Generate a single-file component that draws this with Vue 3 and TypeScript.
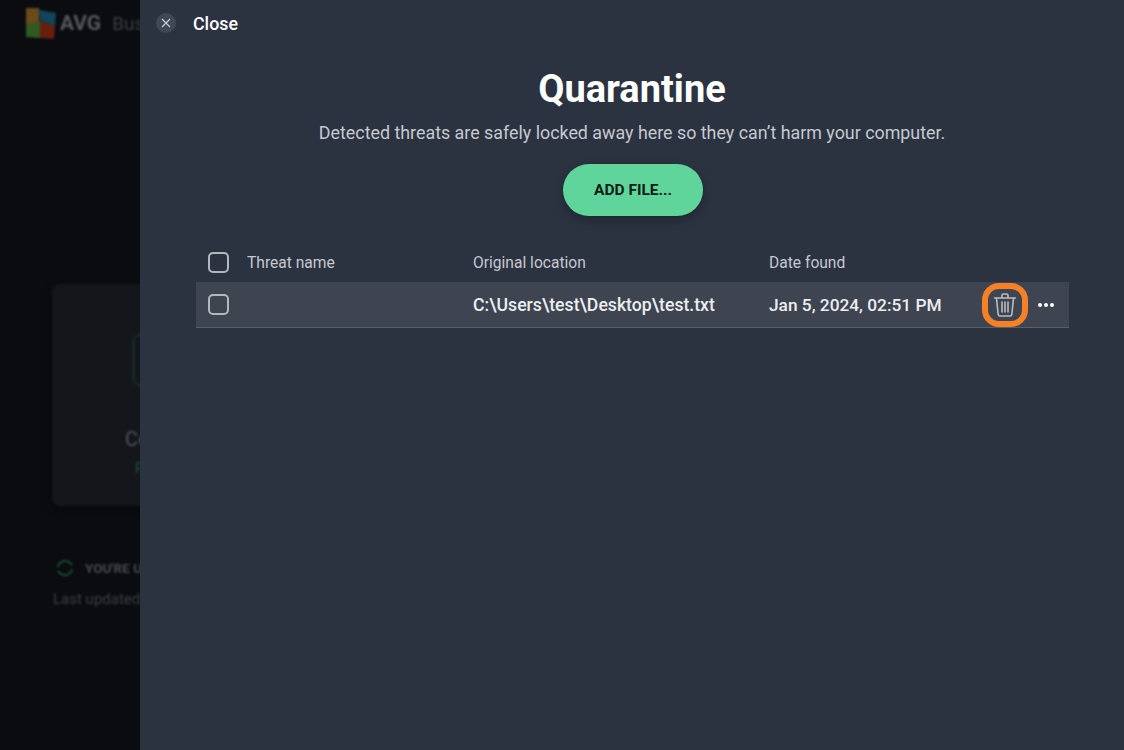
<script setup lang="ts">
const columns = ['Threat name', 'Original location', 'Date found']
const threat = { name: '', location: 'C:\\Users\\test\\Desktop\\test.txt', date: 'Jan 5, 2024, 02:51 PM' }
</script>

<template>
  <div class="screen">
    <aside class="behind">
      <div class="behindInner">
        <div class="brand">
          <svg width="32" height="32" viewBox="0 0 32 32" class="logo">
            <path d="M1 1 L14 1 L14 15 L1 18 Z" fill="#6b4a1a" />
            <path d="M14 3 L31 6 L30 19 L15 14 Z" fill="#10465a" />
            <path d="M1 18 L15 14 L15 31 L1 30 Z" fill="#2f5a22" />
            <path d="M15 14 L30 19 L29 32 L15 31 Z" fill="#6a1e0e" />
          </svg>
          <span class="avg">AVG</span>
          <span class="bus">Business</span>
        </div>
        <div class="card">
          <div class="shield"></div>
          <div class="cardTitle">Computer</div>
          <div class="cardState">Protected</div>
        </div>
        <div class="updated">
          <svg width="20" height="20" viewBox="0 0 20 20" fill="none" stroke="#174a32" stroke-width="2">
            <path d="M3 9a7 7 0 0 1 12-4l2 2M17 11a7 7 0 0 1-12 4l-2-2" />
          </svg>
          <span>YOU'RE UP TO DATE</span>
        </div>
        <div class="lastUpdated">Last updated today</div>
      </div>
    </aside>

    <main class="panel">
      <div class="closeRow">
        <span class="closeBtn">
          <svg width="10" height="10" viewBox="0 0 10 10" stroke="#c9ccd2" stroke-width="1.2">
            <path d="M1 1 L9 9 M9 1 L1 9" />
          </svg>
        </span>
        <span class="closeLabel">Close</span>
      </div>

      <h1 class="title">Quarantine</h1>
      <p class="subtitle">Detected threats are safely locked away here so they can’t harm your computer.</p>
      <button class="addBtn">ADD FILE...</button>

      <div class="table">
        <div class="headRow">
          <span class="check"></span>
          <span v-for="col in columns" :key="col" class="headCell">{{ col }}</span>
        </div>
        <div class="row">
          <span class="check"></span>
          <span class="cell">{{ threat.name }}</span>
          <span class="cell location">{{ threat.location }}</span>
          <span class="cell date">{{ threat.date }}</span>
          <span class="trash">
            <svg width="24" height="26" viewBox="0 0 24 26" fill="none" stroke="#b9bcc2" stroke-width="1.6" stroke-linejoin="round" stroke-linecap="round">
              <path d="M1.5 6 H22.5 M9 5.5 V3.5 Q9 2 10.5 2 H13.5 Q15 2 15 3.5 V5.5" />
              <path d="M3.5 6.5 L5.2 22.5 Q5.4 24 7 24 H17 Q18.6 24 18.8 22.5 L20.5 6.5" />
              <path d="M9 10 V20 M12 10 V20 M15 10 V20" />
            </svg>
          </span>
          <span class="dots"><i></i><i></i><i></i></span>
        </div>
      </div>
    </main>
  </div>
</template>

<style scoped>
.screen {
  display: flex;
  width: 1124px;
  height: 750px;
  overflow: hidden;
  font-family: Roboto, "Liberation Sans", sans-serif;
}

.behind {
  width: 140px;
  flex: none;
  overflow: hidden;
  background: #0a0c10;
}

.behindInner {
  width: 400px;
  padding-left: 25px;
  filter: blur(0.8px);
}

.brand {
  display: flex;
  align-items: center;
  height: 46px;
}

.avg {
  margin-left: 3px;
  font-size: 21px;
  font-weight: 700;
  color: #55585c;
}

.bus {
  margin-left: 11px;
  font-size: 19px;
  color: #3c3f44;
}

.card {
  box-sizing: border-box;
  width: 300px;
  height: 222px;
  margin: 238px 0 0 27px;
  padding: 51px 0 0 73px;
  border-radius: 8px;
  background: #14161b;
  box-shadow: 0 4px 10px rgba(0, 0, 0, 0.4);
}

.shield {
  box-sizing: border-box;
  width: 60px;
  height: 50px;
  margin-left: 8px;
  border: 1px solid #174a32;
  border-radius: 6px;
}

.cardTitle {
  margin-top: 42px;
  font-size: 20px;
  color: #505357;
}

.cardState {
  margin: 8px 0 0 10px;
  font-size: 15px;
  color: #1b5238;
}

.updated {
  display: flex;
  align-items: center;
  gap: 10px;
  margin: 52px 0 0 30px;
  font-size: 13.5px;
  font-weight: 700;
  color: #47494d;
}

.lastUpdated {
  margin: 12px 0 0 28px;
  font-size: 15px;
  color: #3c3f44;
}

.panel {
  flex: 1;
  display: flex;
  flex-direction: column;
  align-items: center;
  background: #2b3240;
  color: #fff;
}

.closeRow {
  align-self: flex-start;
  display: flex;
  align-items: center;
  height: 46px;
  padding-left: 16px;
}

.closeBtn {
  display: flex;
  align-items: center;
  justify-content: center;
  width: 20px;
  height: 20px;
  border-radius: 50%;
  background: #414855;
}

.closeLabel {
  margin-left: 17px;
  font-size: 17.8px;
  font-weight: 500;
}

.title {
  margin: 19px 0 0;
  font-size: 38px;
  line-height: 48px;
  font-weight: 700;
}

.subtitle {
  margin: 8px 0 0;
  font-size: 17.85px;
  line-height: 24px;
  color: #c6c9cf;
}

.addBtn {
  width: 140px;
  height: 52px;
  margin-top: 19px;
  margin-left: 2px;
  border: none;
  border-radius: 26px;
  background: #5fd49b;
  box-shadow: 0 4px 10px rgba(0, 0, 0, 0.25);
  color: #102018;
  font-family: inherit;
  font-size: 15.5px;
  font-weight: 700;
}

.table {
  align-self: flex-start;
  width: 873px;
  margin: 27px 0 0 56px;
}

.headRow,
.row {
  display: grid;
  grid-template-columns: 39px 226px 296px 213px 46px 1fr;
  align-items: center;
  padding-left: 12px;
}

.headRow {
  height: 39px;
}

.headCell {
  padding-top: 1px;
  font-size: 15.6px;
  color: #c6c9cf;
}

.row {
  box-sizing: border-box;
  height: 46px;
  background: #3e4450;
  border-bottom: 1px solid #5a606b;
}

.cell {
  font-weight: 500;
  color: #eceef0;
}

.location {
  font-size: 17.65px;
}

.date {
  font-size: 17.3px;
}

.check {
  box-sizing: border-box;
  width: 21px;
  height: 21px;
  border: 2px solid #b4b7bd;
  border-radius: 5px;
}

.trash {
  box-sizing: border-box;
  display: flex;
  align-items: center;
  justify-content: center;
  width: 46px;
  height: 44px;
  border: 6px solid #f58025;
  border-radius: 17px;
}

.dots {
  display: flex;
  justify-content: center;
  gap: 2px;
  margin-left: 8px;
  width: 20px;
}

.dots i {
  width: 4px;
  height: 4px;
  border-radius: 50%;
  background: #fff;
}
</style>

<style>
body {
  background: #0a0c10;
}
</style>
